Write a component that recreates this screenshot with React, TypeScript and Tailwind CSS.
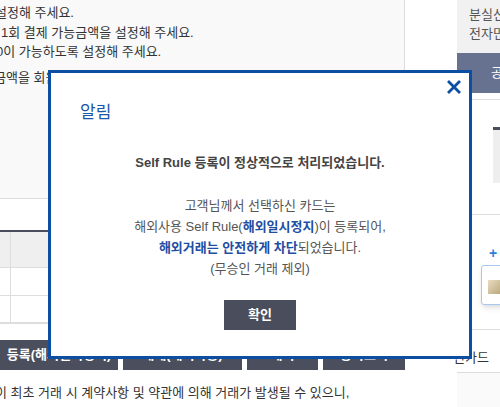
export default function App() {
  const font = { fontFamily: '"Liberation Sans", "Noto Sans CJK KR", sans-serif' };

  return (
    <div style={font} className="relative w-[500px] h-[407px] overflow-hidden bg-white text-[13px] text-[#333]">
      <div className="flex w-[700px] h-full">
        {/* left content */}
        <div className="flex flex-col w-[405px] shrink-0">
          <div className="h-[199px] bg-[#f9f9f9] border-r border-b border-[#dcdcdc] leading-[19px] overflow-hidden">
            <p className="mt-[3px] -ml-[5px] whitespace-nowrap">설정해 주세요.</p>
            <p className="mt-[1px] ml-[1px] whitespace-nowrap">1회 결제 가능금액을 설정해 주세요.</p>
            <p className="-ml-[4px] whitespace-nowrap">0이 가능하도록 설정해 주세요.</p>
            <p className="mt-[7px] -ml-[6px] whitespace-nowrap">금액을 회원님의 한도 내에서 설정해 주세요.</p>
          </div>
          <div className="mt-[31px] border-t-2 border-[#4a4e5c]">
            <div className="flex h-[36px] bg-[#efefef] border-b border-[#dddddd]">
              <div className="w-[11px] border-r border-[#dddddd]" />
              <div className="flex-1" />
            </div>
            <div className="flex h-[28px] border-b border-[#dddddd]">
              <div className="w-[11px] border-r border-[#dddddd]" />
              <div className="flex-1" />
            </div>
            <div className="flex h-[28px] border-b-2 border-[#dddddd]">
              <div className="w-[11px] border-r border-[#dddddd]" />
              <div className="flex-1" />
            </div>
          </div>
          <div className="flex gap-[5px] mt-[16px] h-[30px] text-white font-bold text-[13px]">
            <div className="w-[118px] bg-[#4b4f5d] flex items-center justify-center whitespace-nowrap">등록(해외일시정지)</div>
            <div className="w-[119px] bg-[#4b4f5d] flex items-center justify-center whitespace-nowrap">해제(해외사용)</div>
            <div className="w-[71px] bg-[#4b4f5d] flex items-center justify-center">해지</div>
            <div className="w-[82px] bg-[#4b4f5d] flex items-center justify-center">등록조회</div>
          </div>
          <p className="mt-[13px] -ml-[5px] whitespace-nowrap text-[#333]">이 최초 거래 시 계약사항 및 약관에 의해 거래가 발생될 수 있으니,</p>
        </div>

        {/* gap */}
        <div className="w-[52px] shrink-0" />

        {/* right panel */}
        <div className="flex flex-col w-[200px] shrink-0">
          <div className="h-[53px] bg-[#f1f1f1] pl-[12px] pt-[5px] text-[#555] leading-[19px]">
            <p>분실신고</p>
            <p>전자민원</p>
          </div>
          <div className="h-[40px] bg-[#66728f] text-white text-[13px] flex items-center pl-[34px]">공지사항</div>
          <div className="mt-[6px] border-t border-[#dddddd] h-[115px] pt-[27px] pl-[36px]">
            <div className="w-[60px] h-[56px] bg-[#eeeeee] border-t-[3px] border-[#4a4e5c]" />
          </div>
          <div className="border-t border-[#dddddd] h-[115px] pl-[24px] pt-[32px]">
            <div className="text-[#2e7fd8] font-bold text-[14px] leading-[12px] pl-[8px]">+</div>
            <div className="mt-[6px] w-[60px] h-[40px] bg-white border border-[#a9c8ec] rounded-[3px] shadow-md p-[6px] pt-[14px]">
              <div className="w-[14px] h-[14px] bg-gradient-to-br from-[#e9dcc0] to-[#b8a67a]" />
            </div>
          </div>
          <div className="border-t border-[#dddddd] h-[43px] flex items-end pb-[5px] -ml-[4px] text-[13px] text-[#333]">인카드</div>
          <div className="border-t border-[#dddddd] flex-1 bg-[#fafafa]" />
        </div>
      </div>

      {/* modal */}
      <div className="absolute left-[48px] top-[70px] w-[424px] h-[289px] bg-white border-[3px] border-[#0b4ea2] flex flex-col">
        <button className="absolute right-[8px] top-[7px] w-[14px] h-[14px]" aria-label="close">
          <svg width="14" height="14" viewBox="0 0 14 14">
            <path d="M2 2 L12 12 M12 2 L2 12" stroke="#0b4ea2" strokeWidth="2.8" strokeLinecap="square" fill="none" />
          </svg>
        </button>
        <h2 className="mt-[26px] ml-[29px] text-[17px] leading-[24px] text-[#1c56a8]" style={{ fontFamily: '"Noto Sans CJK KR", sans-serif' }}>알림</h2>
        <p className="mt-[29px] text-center font-bold text-[13px] leading-[21px] text-[#444]">Self Rule 등록이 정상적으로 처리되었습니다.</p>
        <div className="mt-[22px] text-center text-[13px] leading-[21px] text-[#555]">
          <p>고객님께서 선택하신 카드는</p>
          <p>해외사용 Self Rule(<span className="font-bold text-[#1f4ea3]">해외일시정지</span>)이 등록되어,</p>
          <p><span className="font-bold text-[#1f4ea3]">해외거래는 안전하게 차단</span>되었습니다.</p>
          <p>(무승인 거래 제외)</p>
        </div>
        <div className="mt-[21px] flex justify-center">
          <button className="w-[72px] h-[30px] bg-[#4a4e5c] text-white font-bold text-[13px]">확인</button>
        </div>
      </div>
    </div>
  );
}
